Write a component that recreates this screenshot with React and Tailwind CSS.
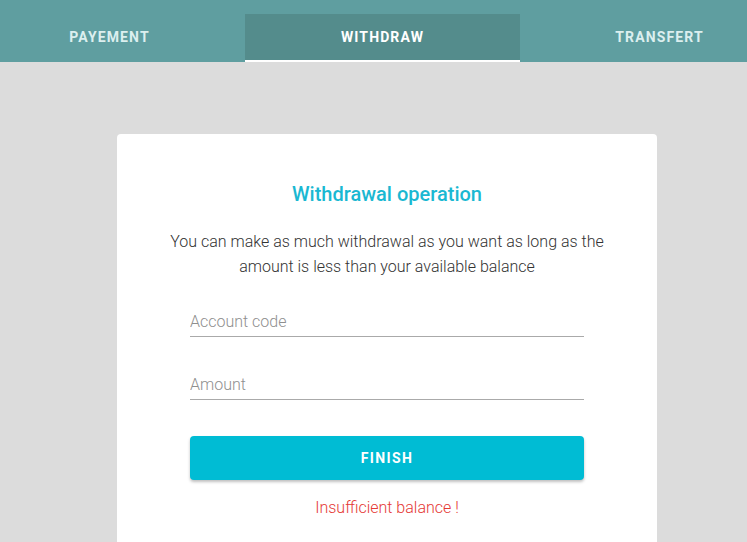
import { useState } from "react";

const tabs = ["PAYEMENT", "WITHDRAW", "TRANSFERT"];

export default function App() {
  const [active, setActive] = useState("WITHDRAW");

  return (
    <div
      className="min-h-screen bg-[#dcdcdc] overflow-hidden"
      style={{ fontFamily: "Roboto, 'Liberation Sans', sans-serif" }}
    >
      {/* Tabs */}
      <header className="h-[62px] bg-[#5f9ea0] flex items-end">
        <nav className="flex -ml-[30px]">
          {tabs.map((tab) => (
            <button
              key={tab}
              onClick={() => setActive(tab)}
              className={
                active === tab
                  ? "w-[275px] h-[48px] bg-[#548c8c] border-b-2 border-white text-white text-[14px] font-bold tracking-[0.08em] pt-[0px]"
                  : "w-[275px] h-[48px] text-[#dcefef] text-[14px] font-bold tracking-[0.08em] pb-[2px]"
              }
            >
              <span className={tab === "WITHDRAW" ? "" : "pl-[4px]"}>{tab}</span>
            </button>
          ))}
        </nav>
      </header>

      {/* Card */}
      <main className="w-[774px] flex justify-center pt-[72px]">
        <div className="w-[540px] bg-white rounded-[4px] px-[73px] pt-[48px] pb-[40px] flex flex-col items-center">
          <h1 className="text-[20px] font-medium text-[#1ab8d2] leading-[24px]">
            Withdrawal operation
          </h1>
          <p className="mt-[23px] text-[16px] font-light text-[#333] text-center leading-[25px] w-[470px]">
            You can make as much withdrawal as you want as long as the amount is less than your available balance
          </p>

          <div className="w-full mt-[28px]">
            <input
              placeholder="Account code"
              className="w-full h-[30px] border-b border-[#aaa] text-[16px] font-light text-[#333] placeholder:text-[#8f8f8f] outline-none"
            />
          </div>
          <div className="w-full mt-[33px]">
            <input
              placeholder="Amount"
              className="w-full h-[30px] border-b border-[#aaa] text-[16px] font-light text-[#333] placeholder:text-[#8f8f8f] outline-none"
            />
          </div>

          <button className="w-full h-[44px] mt-[36px] bg-[#00bcd4] rounded-[4px] shadow-[0_2px_3px_rgba(0,0,0,0.25)] text-white text-[14px] font-bold tracking-[0.1em]">
            FINISH
          </button>

          <p className="mt-[16px] text-[16px] font-light text-[#e53935]">
            Insufficient balance !
          </p>
        </div>
      </main>
    </div>
  );
}
